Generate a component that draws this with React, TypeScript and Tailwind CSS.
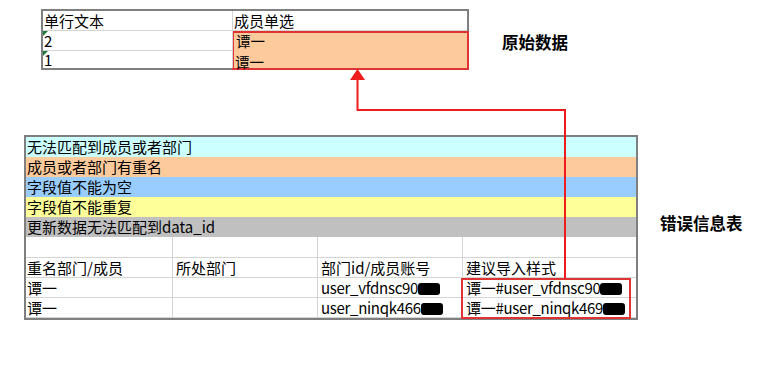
const errorRows = [
  { text: "无法匹配到成员或者部门", bg: "bg-[#ccffff]" },
  { text: "成员或者部门有重名", bg: "bg-[#fdca9c]" },
  { text: "字段值不能为空", bg: "bg-[#99ccff]" },
  { text: "字段值不能重复", bg: "bg-[#ffff99]" },
  { text: "更新数据无法匹配到data_id", bg: "bg-[#c0c0c0]" },
];

const dupRows = [
  { name: "谭一", account: "user_vfdnsc90", suggest: "谭一#user_vfdnsc90" },
  { name: "谭一", account: "user_ninqk466", suggest: "谭一#user_ninqk469" },
];

function Blot() {
  return <span className="inline-block w-[22px] h-[12px] bg-black rounded-[3px] align-[-1px]" />;
}

function GreenTick() {
  return (
    <span className="absolute left-0 top-0 w-0 h-0 border-t-[5px] border-r-[5px] border-t-[#1e7a3a] border-r-transparent" />
  );
}

function SourceTable() {
  return (
    <div className="w-[428px] border-2 border-[#7f7f7f] bg-white grid grid-cols-[190px_1fr] text-[15px] leading-[20px]">
      <div className="h-[20px] px-px border-r border-b border-[#d4d4d4]">单行文本</div>
      <div className="h-[20px] px-px border-b border-[#d4d4d4]">成员单选</div>
      <div className="flex flex-col">
        <div className="relative h-[20px] px-px border-r border-b border-[#d4d4d4]">
          <GreenTick />
          2
        </div>
        <div className="relative h-[17px] leading-[18px] px-px border-r border-[#d4d4d4]">
          <GreenTick />
          1
        </div>
      </div>
      <div className="h-[39px] -ml-px -mr-[2px] -mb-[2px] border-2 border-[#e03434] bg-[#fdca9c] flex flex-col text-[14.5px] leading-[21px]">
        <div className="h-[21px] -mt-[3px] px-[2px]">谭一</div>
        <div className="h-[14px] px-px">谭一</div>
      </div>
    </div>
  );
}

function ErrorTable() {
  const cell = "h-[20px] px-[3px] border-r border-b border-[#d4d4d4] whitespace-nowrap overflow-hidden";
  return (
    <div className="relative w-[614px] border-2 border-[#7f7f7f] bg-white text-[15px] leading-[20px]">
      {errorRows.map((r) => (
        <div key={r.text} className={`h-[20px] px-px ${r.bg}`}>
          {r.text}
        </div>
      ))}
      <div className="grid grid-cols-[147px_145px_145px_1fr]">
        <div className={`${cell} h-[21px]`} />
        <div className={`${cell} h-[21px]`} />
        <div className={`${cell} h-[21px]`} />
        <div className="h-[21px] border-b border-[#d4d4d4]" />
        <div className={`${cell} px-px`}>重名部门/成员</div>
        <div className={cell}>所处部门</div>
        <div className={cell}>部门id/成员账号</div>
        <div className="h-[20px] px-[3px] border-b border-[#d4d4d4]">建议导入样式</div>
        {dupRows.map((r, i) => (
          <div key={i} className="contents">
            <div className={`${cell} px-px`}>{r.name}</div>
            <div className={cell} />
            <div className={`${cell} tracking-[-0.3px]`}>
              {r.account}
              <Blot />
            </div>
            <div className="h-[20px] px-[3px] border-b border-[#d4d4d4] whitespace-nowrap tracking-[-0.3px]">
              {r.suggest}
              <Blot />
            </div>
          </div>
        ))}
      </div>
      <div className="absolute left-[435px] top-[141px] w-[170px] h-[41px] border-2 border-[#e03434] pointer-events-none" />
    </div>
  );
}

export default function App() {
  return (
    <div className="relative w-[772px] h-[367px] bg-white text-black font-['Noto_Sans_CJK_SC',sans-serif] overflow-hidden">
      <div className="flex items-start pt-[9px] pl-[41px]">
        <SourceTable />
        <div className="ml-[33px] mt-[23px] text-[16.5px] font-bold leading-[20px]">原始数据</div>
      </div>
      <div className="flex items-start mt-[65px] pl-[24px]">
        <ErrorTable />
        <div className="ml-[22px] mt-[78px] text-[16.5px] font-bold leading-[20px]">错误信息表</div>
      </div>
      <svg className="absolute inset-0 pointer-events-none" width="772" height="367">
        <polyline points="565,278 565,110 357.5,110 357.5,79" fill="none" stroke="#ee1c1c" strokeWidth="2" />
        <polygon points="350,80 365,80 357.5,69" fill="#ee1c1c" />
      </svg>
    </div>
  );
}
